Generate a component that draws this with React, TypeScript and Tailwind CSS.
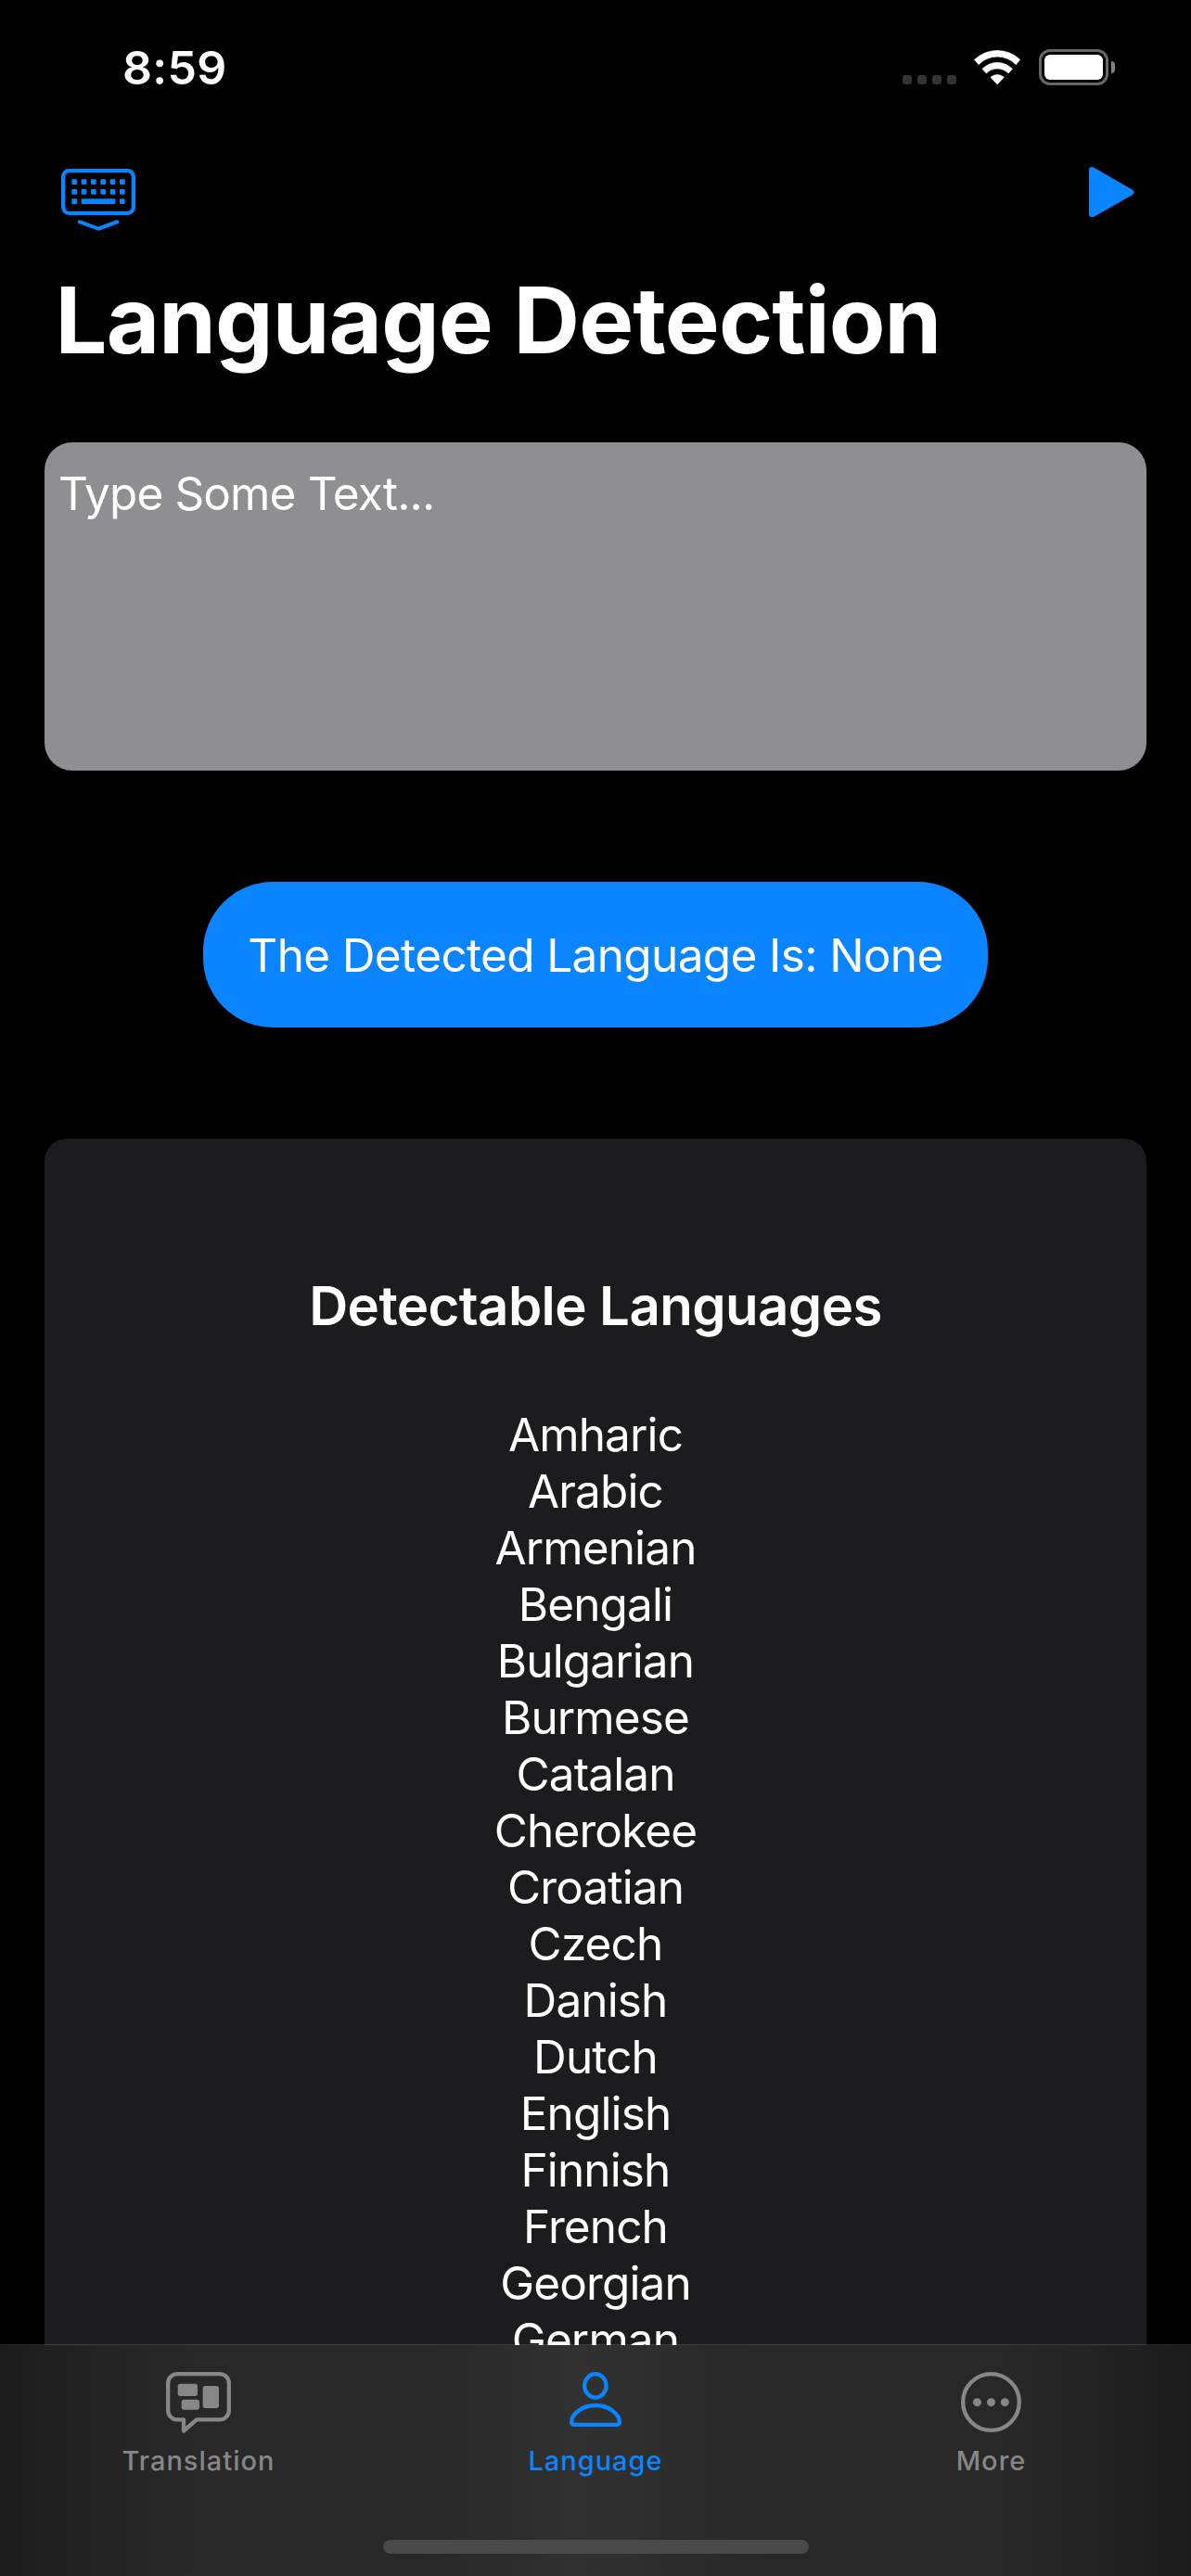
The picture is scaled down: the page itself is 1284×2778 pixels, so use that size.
import type { ReactNode } from "react";

const languages = [
  "Amharic",
  "Arabic",
  "Armenian",
  "Bengali",
  "Bulgarian",
  "Burmese",
  "Catalan",
  "Cherokee",
  "Croatian",
  "Czech",
  "Danish",
  "Dutch",
  "English",
  "Finnish",
  "French",
  "Georgian",
  "German",
];

function WifiIcon() {
  return (
    <svg viewBox="0 0 151 112" className="h-[37.33px] w-[50.33px]" fill="#fff" stroke="#fff" strokeWidth="2" strokeLinejoin="round">
      <path d="M2 31A106 106 0 0 1 149 31L136 47A84 84 0 0 0 15 47Z" />
      <path d="M27 61A67 67 0 0 1 124 61L111 75A49.5 49.5 0 0 0 40 75Z" />
      <path d="M54 88A32 32 0 0 1 97 88L75.5 111Z" />
    </svg>
  );
}

function KeyboardDismissIcon() {
  const columns = [34, 65, 96, 127, 158, 189];
  return (
    <svg viewBox="0 0 240 201" className="h-[67px] w-[80px]" fill="#0a84ff">
      <rect x="6.5" y="6.5" width="227" height="137" rx="19" fill="none" stroke="#0a84ff" strokeWidth="13" />
      {columns.map((x) => (
        <rect key={x} x={x} y="34" width="17" height="17" rx="3" />
      ))}
      {columns.map((x) => (
        <rect key={x} x={x} y="66" width="17" height="17" rx="3" />
      ))}
      <rect x="34" y="97" width="17" height="17" rx="3" />
      <rect x="65" y="97" width="110" height="17" rx="3" />
      <rect x="189" y="97" width="17" height="17" rx="3" />
      <path d="M60 172L120 194L181 172" fill="none" stroke="#0a84ff" strokeWidth="12.5" strokeLinecap="round" strokeLinejoin="round" />
    </svg>
  );
}

function PlayIcon() {
  return (
    <svg viewBox="0 0 145 163" className="h-[54.33px] w-[48.33px]">
      <path d="M10 10L135 82L10 153Z" fill="#0a84ff" stroke="#0a84ff" strokeWidth="20" strokeLinejoin="round" />
    </svg>
  );
}

function TranslationIcon() {
  return (
    <svg viewBox="0 0 210 197" className="h-[65.67px] w-[70px]" fill="currentColor">
      <path
        d="M36 6.5H174A29.5 29.5 0 0 1 203.5 36V124.5A29.5 29.5 0 0 1 174 154H99L57 190.5V154H36A29.5 29.5 0 0 1 6.5 124.5V36A29.5 29.5 0 0 1 36 6.5Z"
        fill="none"
        stroke="currentColor"
        strokeWidth="13"
        strokeLinejoin="round"
      />
      <rect x="38" y="38" width="64" height="40" rx="8" />
      <rect x="119" y="45" width="52" height="72" rx="8" />
      <rect x="50" y="89" width="58" height="33" rx="8" />
    </svg>
  );
}

function PersonIcon() {
  return (
    <svg viewBox="0 0 168 177" className="h-[59px] w-[56px]" fill="none" stroke="currentColor" strokeWidth="13">
      <ellipse cx="83.5" cy="44.5" rx="35" ry="38" />
      <path d="M16 170.5H152Q161.5 170.5 161.5 161C161.5 138 129 108 84 108S6.5 138 6.5 161Q6.5 170.5 16 170.5Z" />
    </svg>
  );
}

function MoreIcon() {
  return (
    <svg viewBox="0 0 195 195" className="h-[65px] w-[65px]" fill="currentColor">
      <circle cx="97.5" cy="97.5" r="91" fill="none" stroke="currentColor" strokeWidth="13" />
      <circle cx="52.5" cy="98" r="13.5" />
      <circle cx="97.5" cy="98" r="13.5" />
      <circle cx="142" cy="98" r="13.5" />
    </svg>
  );
}

function Tab({ label, active = false, children }: { label: string; active?: boolean; children: ReactNode }) {
  return (
    <button className={`flex flex-col items-center pt-[29px] ${active ? "text-[#0a84ff]" : "text-[#878787]"}`}>
      <span className="flex h-[66px] items-start">{children}</span>
      <span className="mt-3 text-[29px] leading-9 font-medium tracking-[1px]">{label}</span>
    </button>
  );
}

export default function App() {
  return (
    <div className="flex h-[2778px] w-[1284px] flex-col overflow-hidden bg-black font-['Inter',sans-serif] text-white">
      <header className="shrink-0">
        <div className="flex h-[145px] items-center justify-between pr-[82px] pl-[132px]">
          <span className="text-[50px] leading-none font-semibold tracking-[0.3px]">8:59</span>
          <div className="flex items-center">
            <div className="mt-[27px] mr-[19px] flex gap-[6px]">
              {[0, 1, 2, 3].map((dot) => (
                <span key={dot} className="size-[10px] rounded-[3px] bg-[#343434]" />
              ))}
            </div>
            <WifiIcon />
            <div className="ml-[19.7px] flex items-center gap-[3px]">
              <div className="h-[39px] w-[75px] rounded-[12px] border-3 border-[#666] p-[3px]">
                <div className="h-full w-full rounded-[6px] bg-white" />
              </div>
              <div className="h-[13px] w-[4px] rounded-r-full bg-[#808080]" />
            </div>
          </div>
        </div>
        <div className="flex h-[137px] items-start justify-between pr-[61.5px] pl-[66px]">
          <button className="mt-[37px]">
            <KeyboardDismissIcon />
          </button>
          <button className="mt-[34.5px]">
            <PlayIcon />
          </button>
        </div>
        <h1 className="h-[195px] pl-[59.5px] text-[99px] leading-[126px] font-bold tracking-[-0.85px]">Language Detection</h1>
      </header>

      <main className="flex min-h-0 flex-1 flex-col items-center overflow-hidden px-12">
        <div className="h-[354px] w-full shrink-0 rounded-[30px] bg-[#8e8e93] pt-[25px] pl-[15px] text-[49.5px] leading-[60px] tracking-[-0.87px]">
          Type Some Text...
        </div>
        <div className="mt-[120px] flex h-[157px] w-[846px] shrink-0 items-center justify-center rounded-[75px] bg-[#0a84ff] pt-px text-[49.5px] leading-[61px] tracking-[-0.64px]">
          The Detected Language Is: None
        </div>
        <section className="mt-[120px] w-full shrink-0 rounded-t-[24px] bg-[#1c1c1e] pt-[144px] text-center">
          <h2 className="mb-[73px] text-[58.2px] leading-[72px] font-semibold tracking-[-0.6px]">Detectable Languages</h2>
          <ul className="text-[49.5px] leading-[61px] tracking-[-0.88px]">
            {languages.map((language) => (
              <li key={language}>{language}</li>
            ))}
          </ul>
        </section>
      </main>

      <nav className="relative h-[249px] shrink-0 bg-[linear-gradient(90deg,#1c1c1c_0%,#212121_5%,#262626_11%,#282828_16%,#282828_35%,#2c2c2c_42%,#313131_48%,#303030_52%,#2b2b2b_58%,#282828_65%,#282828_84%,#252525_90%,#202020_95%,#1b1b1b_100%)]">
        <div className="absolute inset-x-0 -top-px h-px bg-white/15" />
        <div className="grid grid-cols-[428px_428px_425px]">
          <Tab label="Translation">
            <TranslationIcon />
          </Tab>
          <Tab label="Language" active>
            <PersonIcon />
          </Tab>
          <Tab label="More">
            <MoreIcon />
          </Tab>
        </div>
        <div className="absolute bottom-6 left-[413px] h-[15px] w-[459px] rounded-full bg-[#4a4a4a]" />
      </nav>
    </div>
  );
}
